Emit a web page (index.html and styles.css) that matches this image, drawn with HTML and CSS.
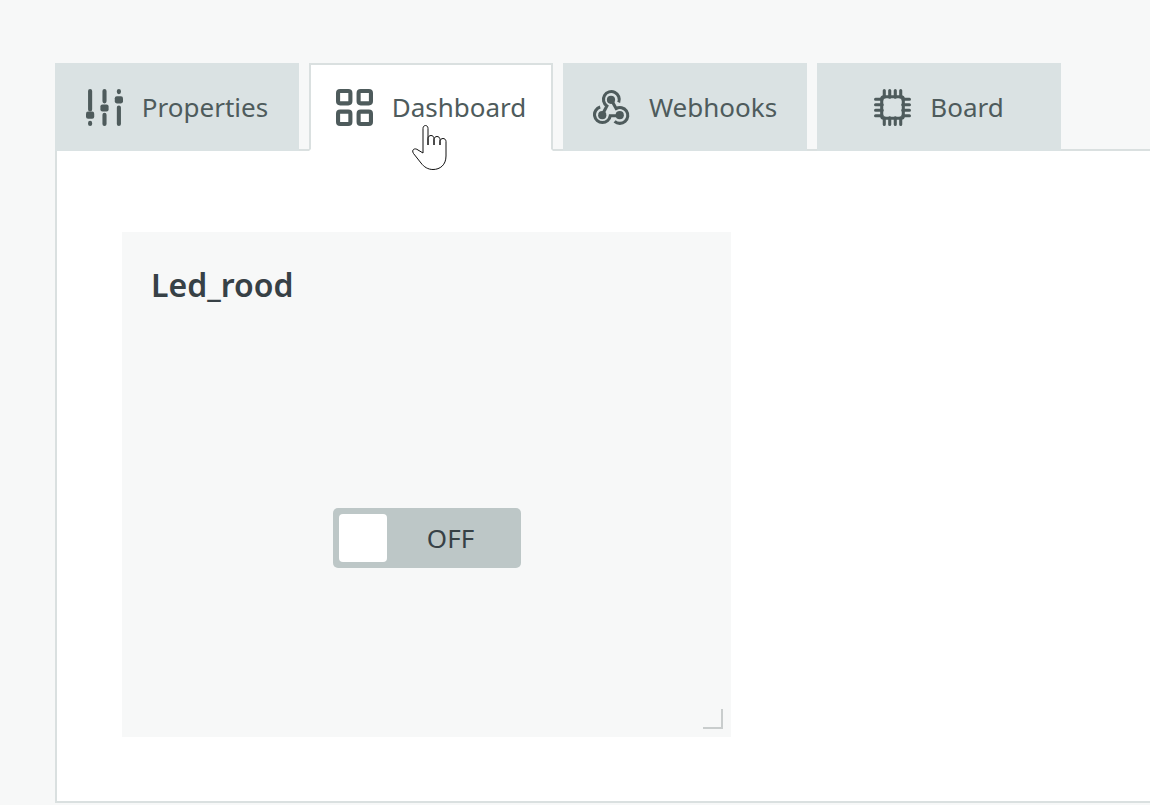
FILE: index.html
```html
<!DOCTYPE html>
<html lang="en">
<head>
  <meta charset="UTF-8" />
  <meta name="viewport" content="width=device-width, initial-scale=1.0" />
  <title>Dashboard</title>
  <link rel="stylesheet" href="styles.css">
</head>

<body>
  <main class="thing">
    <nav class="tabs">
      <a href="#properties" class="tab">
        <svg class="tab-icon" viewBox="0 0 36 36" aria-hidden="true">
          <path d="M4 2v18M4 34v-1M18 2v10M18 25v9M32 2v1M32 18v16" fill="none" stroke="currentColor" stroke-width="4" stroke-linecap="round" />
          <rect x="0" y="22" width="8" height="7" rx="2" />
          <rect x="14" y="15" width="8" height="7" rx="2" />
          <rect x="28" y="7" width="8" height="7" rx="2" />
        </svg>
        <span>Properties</span>
      </a>
      <a href="#dashboard" class="tab active" aria-current="page">
        <svg class="tab-icon" viewBox="0 0 36 36" aria-hidden="true">
          <g fill="none" stroke="currentColor" stroke-width="4">
            <rect x="2" y="2" width="12" height="12" rx="2" />
            <rect x="22" y="2" width="12" height="12" rx="2" />
            <rect x="2" y="22" width="12" height="12" rx="2" />
            <rect x="22" y="22" width="12" height="12" rx="2" />
          </g>
        </svg>
        <span>Dashboard</span>
        <svg class="pointer" viewBox="0 0 36 48" aria-hidden="true">
          <path d="M11 29V4.500C11 0.500 16 0.500 16 4.500V21V14.500C16 10.500 22 10.500 22 14.500V21V15.500C22 11.500 28 11.500 28 15.500V21V17.500C28 13.500 34 13.500 34 17.500V32C34 41 28 45.500 21 45.500C16 45.500 12 43 9 39L1.500 29.500C-1 25.500 3 23.500 6 26Z" />
        </svg>
      </a>
      <a href="#webhooks" class="tab">
        <svg class="tab-icon" viewBox="0 0 36 36" aria-hidden="true">
          <g fill="none" stroke="currentColor" stroke-width="3">
            <path d="M25 13A7.700 7.700 0 1 0 13.500 16.500L9 25" />
            <path d="M7 17.500A7.700 7.700 0 1 0 16.800 26H26" />
            <path d="M17.500 10L22.500 19A7.700 7.700 0 1 1 21 31.500" />
          </g>
          <circle cx="17.500" cy="10.500" r="4" />
          <circle cx="9" cy="25.500" r="4" />
          <circle cx="26" cy="25.500" r="4" />
        </svg>
        <span>Webhooks</span>
      </a>
      <a href="#board" class="tab">
        <svg class="tab-icon" viewBox="0 0 36 36" aria-hidden="true">
          <g fill="none" stroke="currentColor" stroke-width="3">
            <rect x="7.500" y="7.500" width="21" height="21" rx="2" />
            <path d="M10 8V1.500M15.300 8V1.500M20.700 8V1.500M26 8V1.500M10 28V34.500M15.300 28V34.500M20.700 28V34.500M26 28V34.500M8 10H1.500M8 15.300H1.500M8 20.700H1.500M8 26H1.500M28 10H34.500M28 15.300H34.500M28 20.700H34.500M28 26H34.500" stroke-linecap="round" />
          </g>
        </svg>
        <span>Board</span>
      </a>
    </nav>

    <div class="panel">
      <section class="widget">
        <h2 class="widget-title">Led_rood</h2>
        <div class="widget-body">
          <label class="switch">
            <input type="checkbox" role="switch" class="switch-input" aria-label="Led_rood">
            <span class="switch-text">OFF</span>
          </label>
        </div>
        <span class="resize-handle"></span>
      </section>
    </div>
  </main>
</body>
</html>
```

FILE: styles.css
```css
* {
  margin: 0;
  padding: 0;
  box-sizing: border-box;
}

body {
  background-color: #f7f8f8;
  color: #4e5b61;
  font-family: 'Noto Sans', 'Open Sans', sans-serif;
  font-size: 26px;
  overflow-x: hidden;
}

.thing {
  padding: 63px 0 2px 55px;
}

.tabs {
  display: flex;
  gap: 10px;
}

.tab {
  position: relative;
  display: flex;
  align-items: center;
  justify-content: center;
  gap: 19px;
  flex: 0 1 244px;
  height: 88px;
  background-color: #dae2e3;
  color: #4e5b5c;
  line-height: 36px;
  text-decoration: none;
}

.tab.active {
  z-index: 1;
  background-color: white;
  border: 2px solid #dae0e0;
  border-bottom-color: white;
}

.tab-icon {
  width: 37px;
  height: 37px;
  flex-shrink: 0;
  fill: currentColor;
}

/* hand cursor over the open tab */
.pointer {
  position: absolute;
  left: 101px;
  top: 59px;
  width: 36px;
  height: 48px;
  fill: white;
  stroke: #111111;
  stroke-width: 1px;
  stroke-linejoin: round;
}

.panel {
  margin-top: -2px;
  padding: 81px 65px 64px;
  background-color: white;
  border: 2px solid #dae0e0;
  border-right: none;
}

.widget {
  position: relative;
  display: flex;
  flex-direction: column;
  max-width: 609px;
  min-height: 505px;
  background-color: #f7f8f8;
}

.widget-title {
  padding: 33px 29px 34px;
  color: #374146;
  font-size: 32px;
  font-weight: 600;
  line-height: 40px;
}

.widget-body {
  flex: 1;
  display: flex;
  align-items: center;
  justify-content: center;
}

.switch {
  display: flex;
  align-items: center;
  width: 188px;
  height: 60px;
  padding: 6px;
  background-color: #bdc7c7;
  border-radius: 5px;
  cursor: pointer;
}

.switch-input {
  appearance: none;
  width: 48px;
  height: 48px;
  background-color: white;
  border-radius: 4px;
}

.switch-text {
  flex: 1;
  color: #374146;
  text-align: center;
}

.resize-handle {
  position: absolute;
  right: 8px;
  bottom: 8px;
  width: 20px;
  height: 20px;
  border-right: 2px solid #c9cdcd;
  border-bottom: 2px solid #c9cdcd;
}
```
